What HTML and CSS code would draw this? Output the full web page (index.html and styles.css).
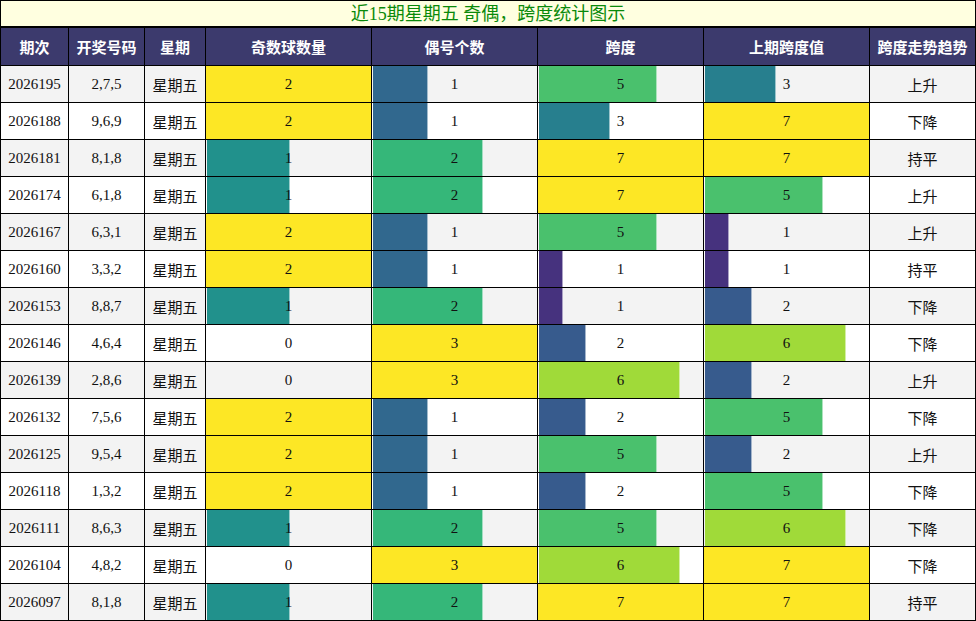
FILE: index.html
```html
<!DOCTYPE html>
<html lang="zh">
<head>
<meta charset="utf-8">
<title>近15期星期五 奇偶，跨度统计图示</title>
<link rel="stylesheet" href="styles.css">
</head>
<body>
<div class="board">
  <div class="title">近15期星期五 奇偶，跨度统计图示</div>
  <div class="grid">
    <div class="row head">
      <div class="cell">期次</div><div class="cell">开奖号码</div><div class="cell">星期</div><div class="cell">奇数球数量</div><div class="cell">偶号个数</div><div class="cell">跨度</div><div class="cell">上期跨度值</div><div class="cell">跨度走势趋势</div>
    </div>

    <div class="row alt">
      <div class="cell">2026195</div><div class="cell">2,7,5</div><div class="cell cjk">星期五</div>
      <div class="cell bar"><span class="fill v100" style="width:100%"></span><span class="num">2</span></div>
      <div class="cell bar"><span class="fill e1" style="width:33.33%"></span><span class="num">1</span></div>
      <div class="cell bar"><span class="fill s5" style="width:71.43%"></span><span class="num">5</span></div>
      <div class="cell bar"><span class="fill s3" style="width:42.86%"></span><span class="num">3</span></div>
      <div class="cell cjk">上升</div>
    </div>
    <div class="row">
      <div class="cell">2026188</div><div class="cell">9,6,9</div><div class="cell cjk">星期五</div>
      <div class="cell bar"><span class="fill v100" style="width:100%"></span><span class="num">2</span></div>
      <div class="cell bar"><span class="fill e1" style="width:33.33%"></span><span class="num">1</span></div>
      <div class="cell bar"><span class="fill s3" style="width:42.86%"></span><span class="num">3</span></div>
      <div class="cell bar"><span class="fill v100" style="width:100%"></span><span class="num">7</span></div>
      <div class="cell cjk">下降</div>
    </div>
    <div class="row alt">
      <div class="cell">2026181</div><div class="cell">8,1,8</div><div class="cell cjk">星期五</div>
      <div class="cell bar"><span class="fill o1" style="width:50%"></span><span class="num">1</span></div>
      <div class="cell bar"><span class="fill e2" style="width:66.67%"></span><span class="num">2</span></div>
      <div class="cell bar"><span class="fill v100" style="width:100%"></span><span class="num">7</span></div>
      <div class="cell bar"><span class="fill v100" style="width:100%"></span><span class="num">7</span></div>
      <div class="cell cjk">持平</div>
    </div>
    <div class="row">
      <div class="cell">2026174</div><div class="cell">6,1,8</div><div class="cell cjk">星期五</div>
      <div class="cell bar"><span class="fill o1" style="width:50%"></span><span class="num">1</span></div>
      <div class="cell bar"><span class="fill e2" style="width:66.67%"></span><span class="num">2</span></div>
      <div class="cell bar"><span class="fill v100" style="width:100%"></span><span class="num">7</span></div>
      <div class="cell bar"><span class="fill s5" style="width:71.43%"></span><span class="num">5</span></div>
      <div class="cell cjk">上升</div>
    </div>
    <div class="row alt">
      <div class="cell">2026167</div><div class="cell">6,3,1</div><div class="cell cjk">星期五</div>
      <div class="cell bar"><span class="fill v100" style="width:100%"></span><span class="num">2</span></div>
      <div class="cell bar"><span class="fill e1" style="width:33.33%"></span><span class="num">1</span></div>
      <div class="cell bar"><span class="fill s5" style="width:71.43%"></span><span class="num">5</span></div>
      <div class="cell bar"><span class="fill s1" style="width:14.29%"></span><span class="num">1</span></div>
      <div class="cell cjk">上升</div>
    </div>
    <div class="row">
      <div class="cell">2026160</div><div class="cell">3,3,2</div><div class="cell cjk">星期五</div>
      <div class="cell bar"><span class="fill v100" style="width:100%"></span><span class="num">2</span></div>
      <div class="cell bar"><span class="fill e1" style="width:33.33%"></span><span class="num">1</span></div>
      <div class="cell bar"><span class="fill s1" style="width:14.29%"></span><span class="num">1</span></div>
      <div class="cell bar"><span class="fill s1" style="width:14.29%"></span><span class="num">1</span></div>
      <div class="cell cjk">持平</div>
    </div>
    <div class="row alt">
      <div class="cell">2026153</div><div class="cell">8,8,7</div><div class="cell cjk">星期五</div>
      <div class="cell bar"><span class="fill o1" style="width:50%"></span><span class="num">1</span></div>
      <div class="cell bar"><span class="fill e2" style="width:66.67%"></span><span class="num">2</span></div>
      <div class="cell bar"><span class="fill s1" style="width:14.29%"></span><span class="num">1</span></div>
      <div class="cell bar"><span class="fill s2" style="width:28.57%"></span><span class="num">2</span></div>
      <div class="cell cjk">下降</div>
    </div>
    <div class="row">
      <div class="cell">2026146</div><div class="cell">4,6,4</div><div class="cell cjk">星期五</div>
      <div class="cell bar"><span class="num">0</span></div>
      <div class="cell bar"><span class="fill v100" style="width:100%"></span><span class="num">3</span></div>
      <div class="cell bar"><span class="fill s2" style="width:28.57%"></span><span class="num">2</span></div>
      <div class="cell bar"><span class="fill s6" style="width:85.71%"></span><span class="num">6</span></div>
      <div class="cell cjk">下降</div>
    </div>
    <div class="row alt">
      <div class="cell">2026139</div><div class="cell">2,8,6</div><div class="cell cjk">星期五</div>
      <div class="cell bar"><span class="num">0</span></div>
      <div class="cell bar"><span class="fill v100" style="width:100%"></span><span class="num">3</span></div>
      <div class="cell bar"><span class="fill s6" style="width:85.71%"></span><span class="num">6</span></div>
      <div class="cell bar"><span class="fill s2" style="width:28.57%"></span><span class="num">2</span></div>
      <div class="cell cjk">上升</div>
    </div>
    <div class="row">
      <div class="cell">2026132</div><div class="cell">7,5,6</div><div class="cell cjk">星期五</div>
      <div class="cell bar"><span class="fill v100" style="width:100%"></span><span class="num">2</span></div>
      <div class="cell bar"><span class="fill e1" style="width:33.33%"></span><span class="num">1</span></div>
      <div class="cell bar"><span class="fill s2" style="width:28.57%"></span><span class="num">2</span></div>
      <div class="cell bar"><span class="fill s5" style="width:71.43%"></span><span class="num">5</span></div>
      <div class="cell cjk">下降</div>
    </div>
    <div class="row alt">
      <div class="cell">2026125</div><div class="cell">9,5,4</div><div class="cell cjk">星期五</div>
      <div class="cell bar"><span class="fill v100" style="width:100%"></span><span class="num">2</span></div>
      <div class="cell bar"><span class="fill e1" style="width:33.33%"></span><span class="num">1</span></div>
      <div class="cell bar"><span class="fill s5" style="width:71.43%"></span><span class="num">5</span></div>
      <div class="cell bar"><span class="fill s2" style="width:28.57%"></span><span class="num">2</span></div>
      <div class="cell cjk">上升</div>
    </div>
    <div class="row">
      <div class="cell">2026118</div><div class="cell">1,3,2</div><div class="cell cjk">星期五</div>
      <div class="cell bar"><span class="fill v100" style="width:100%"></span><span class="num">2</span></div>
      <div class="cell bar"><span class="fill e1" style="width:33.33%"></span><span class="num">1</span></div>
      <div class="cell bar"><span class="fill s2" style="width:28.57%"></span><span class="num">2</span></div>
      <div class="cell bar"><span class="fill s5" style="width:71.43%"></span><span class="num">5</span></div>
      <div class="cell cjk">下降</div>
    </div>
    <div class="row alt">
      <div class="cell">2026111</div><div class="cell">8,6,3</div><div class="cell cjk">星期五</div>
      <div class="cell bar"><span class="fill o1" style="width:50%"></span><span class="num">1</span></div>
      <div class="cell bar"><span class="fill e2" style="width:66.67%"></span><span class="num">2</span></div>
      <div class="cell bar"><span class="fill s5" style="width:71.43%"></span><span class="num">5</span></div>
      <div class="cell bar"><span class="fill s6" style="width:85.71%"></span><span class="num">6</span></div>
      <div class="cell cjk">下降</div>
    </div>
    <div class="row">
      <div class="cell">2026104</div><div class="cell">4,8,2</div><div class="cell cjk">星期五</div>
      <div class="cell bar"><span class="num">0</span></div>
      <div class="cell bar"><span class="fill v100" style="width:100%"></span><span class="num">3</span></div>
      <div class="cell bar"><span class="fill s6" style="width:85.71%"></span><span class="num">6</span></div>
      <div class="cell bar"><span class="fill v100" style="width:100%"></span><span class="num">7</span></div>
      <div class="cell cjk">下降</div>
    </div>
    <div class="row alt">
      <div class="cell">2026097</div><div class="cell">8,1,8</div><div class="cell cjk">星期五</div>
      <div class="cell bar"><span class="fill o1" style="width:50%"></span><span class="num">1</span></div>
      <div class="cell bar"><span class="fill e2" style="width:66.67%"></span><span class="num">2</span></div>
      <div class="cell bar"><span class="fill v100" style="width:100%"></span><span class="num">7</span></div>
      <div class="cell bar"><span class="fill v100" style="width:100%"></span><span class="num">7</span></div>
      <div class="cell cjk">持平</div>
    </div>
  </div>
</div>
</body>
</html>
```

FILE: styles.css
```css
* { box-sizing: border-box; }
html, body { margin: 0; padding: 0; background: #fff; }
body {
  font-family: "Liberation Serif", "Noto Sans CJK SC", serif;
  font-size: 15px;
  color: #111;
}
.board {
  width: 976px;
}
.title {
  height: 28px;
  border: 1px solid #000;
  border-bottom-width: 2px;
  background: #ffffe0;
  color: #0a8a0a;
  font-size: 18px;
  line-height: 27px;
  text-align: center;
}
.grid {
  border-left: 1px solid #000;
}
.row {
  display: grid;
  grid-template-columns: 68px 76px 61px 166px 166px 166px 166px 106px;
  height: 37px;
  background: #fff;
}
.row.alt { background: #f3f3f3; }
.row.head {
  height: 38px;
  background: #3c3a6d;
  color: #fff;
  font-family: "Noto Sans CJK SC", sans-serif;
  font-weight: bold;
  font-size: 15px;
}
.cell {
  border-right: 1px solid #000;
  border-bottom: 1px solid #000;
  display: flex;
  align-items: center;
  justify-content: center;
  white-space: nowrap;
}
.cjk { font-family: "Noto Sans CJK SC", sans-serif; }
.cell.bar {
  display: grid;
  grid-template: 1fr / 1fr;
  align-items: stretch;
}
.fill {
  grid-area: 1 / 1;
  justify-self: start;
  height: 100%;
  margin-left: 1px;
  border-right: 1px solid rgba(255, 255, 255, 0.55);
}
.v100 { background: #fde725; border-right: none; margin-left: 0; }
.num {
  grid-area: 1 / 1;
  align-self: center;
  justify-self: center;
  position: relative;
}
.o1 { background: #21918c; }
.e1 { background: #31688e; }
.e2 { background: #35b779; }
.s1 { background: #46327e; }
.s2 { background: #375b8d; }
.s3 { background: #277f8e; }
.s5 { background: #4ac16d; }
.s6 { background: #a0da39; }
```
